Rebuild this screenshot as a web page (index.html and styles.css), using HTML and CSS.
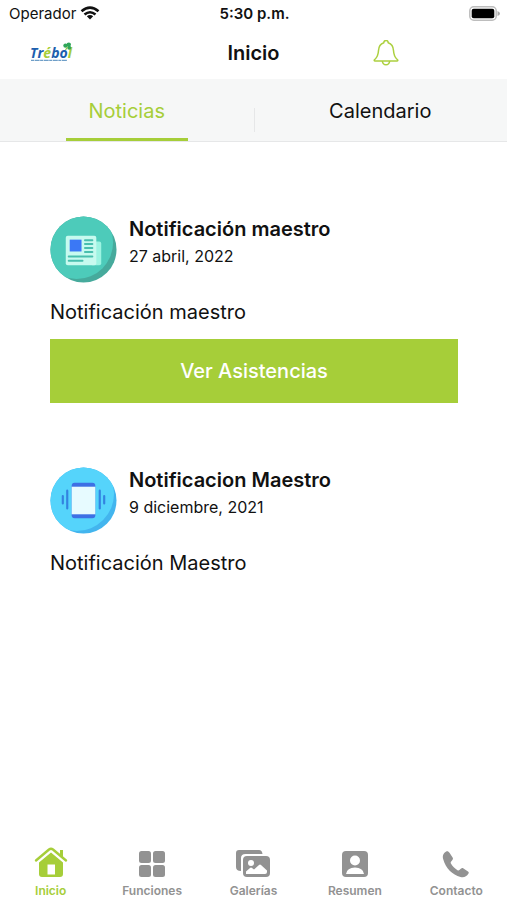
FILE: index.html
```html
<!DOCTYPE html>
<html lang="es">
<head>
<meta charset="utf-8">
<meta name="viewport" content="width=device-width, initial-scale=1">
<title>Inicio</title>
<link rel="stylesheet" href="styles.css">
</head>
<body>
<div class="status">
  <div class="carrier"><span>Operador</span>
    <svg width="20" height="14" viewBox="0 0 20 14" fill="none" stroke="#111" stroke-width="2.6"><path d="M1.5 5.2Q10-2 18.500 5.200"/><path d="M4.500 8.500Q10 4 15.500 8.500"/><path d="M10 13.600 6.800 10.300Q10 7.600 13.200 10.300Z" fill="#111" stroke="none"/></svg>
  </div>
  <div class="time">5:30 p.m.</div>
  <div class="battery">
    <svg width="31" height="15" viewBox="0 0 31 15"><rect x=".8" y=".8" width="26.400" height="13.400" rx="4" fill="#fff" stroke="#bdbdbd" stroke-width="1.500"/><rect x="2.700" y="2.700" width="22.600" height="9.600" rx="2" fill="#000"/><path d="M28.500 5v5q2.500-1 2.500-2.500T28.500 5" fill="#aaa"/></svg>
  </div>
</div>
<header class="header">
  <div class="logo">
    <svg width="44" height="21" viewBox="0 0 44 21" role="img" aria-label="Trébol">
      <text class="logo-text" x="1" y="16"><tspan fill="#1d5fae">Tr</tspan><tspan fill="#a6ce39">é</tspan><tspan fill="#1d5fae">bo</tspan><tspan fill="#a6ce39">l</tspan></text>
      <g fill="#2fa65a"><circle cx="36.500" cy="3.600" r="2.200"/><circle cx="39.800" cy="2.600" r="2.200"/><circle cx="40.200" cy="5.800" r="2"/></g>
      <path d="M38.500 5 36.500 8" stroke="#8cc63f" stroke-width="1.200"/>
      <path d="M2 18.300h36" stroke="#4c87bb" stroke-width="1" stroke-dasharray="3 .6 5 .5"/>
    </svg>
  </div>
  <h1>Inicio</h1>
  <button class="bell" type="button" aria-label="Notificaciones">
    <svg width="26" height="26" viewBox="0 0 26 26" fill="none" stroke="#acd03f" stroke-width="1.500" stroke-linejoin="round"><path d="M10.800 2.700a2.200 2.200 0 0 1 4.400 0C19 4 20.300 6.500 20.500 10.500c.2 4.500.8 6.500 4 9.300.5.600.3 1.100-.5 1.100H2c-.8 0-1-.5-.5-1.100 3.200-2.800 3.800-4.800 4-9.300C5.700 6.500 7 4 10.800 2.700Z"/><path d="M9.300 21c.3 2.500 1.600 3.800 3.700 3.800s3.400-1.300 3.700-3.800"/></svg>
  </button>
</header>
<nav class="tabs" aria-label="Secciones">
  <a class="tab active" href="#noticias">Noticias</a>
  <a class="tab" href="#calendario">Calendario</a>
</nav>
<main class="feed">
  <article>
    <div class="head">
      <svg class="icon" viewBox="0 0 68 68"><defs><clipPath id="disc"><circle cx="34" cy="34" r="33.500"/></clipPath></defs>
        <g clip-path="url(#disc)"><path d="M0 0h68v68H0z" fill="#46aa9c"/><circle cx="27" cy="27" r="37" fill="#4dcbba"/></g>
        <rect x="41" y="26" width="11" height="24" rx="2" fill="#9df4e2"/><rect x="16" y="20" width="31" height="30" rx="2" fill="#c7faef"/>
        <rect x="20" y="24" width="12" height="12" fill="#3b78f5"/>
        <path d="M35.500 24.500H43M35.500 28.500H43M35.500 32.500H43M35.500 36.500H43M19 41h24M19 45.500h14" stroke="#48bfae" stroke-width="2" stroke-linecap="round"/></svg>
      <div><h2>Notificación maestro</h2><time datetime="2022-04-27">27 abril, 2022</time></div>
    </div>
    <p>Notificación maestro</p>
    <button class="action" type="button">Ver Asistencias</button>
  </article>
  <article>
    <div class="head">
      <svg class="icon" viewBox="0 0 68 68">
        <g clip-path="url(#disc)"><path d="M0 0h68v68H0z" fill="#43b5ee"/><circle cx="27" cy="27" r="38" fill="#55d4fb"/></g>
        <rect x="22" y="16" width="24" height="36" rx="3" fill="#3d70e4"/><path d="M22 20h24v28H22z" fill="#e7fbff"/>
        <path d="M17.500 24v18M50.500 24v18M13 29.500v7.500M55 29.500v7.500" stroke="#3383e0" stroke-width="2.200" stroke-linecap="round"/></svg>
      <div><h2>Notificacion Maestro</h2><time datetime="2021-12-09">9 diciembre, 2021</time></div>
    </div>
    <p>Notificación Maestro</p>
  </article>
</main>
<nav class="bottom" aria-label="Principal">
  <a class="active" href="#inicio"><svg width="36" height="32" viewBox="0 0 36 32"><path d="M18 6.500 6 16.500V28q0 3 3 3h18q3 0 3-3V16.500ZM14.500 18.500h7.500V28.500h-7.500Z" fill="currentColor" fill-rule="evenodd"/><path d="M3 14.500 18 2 33 14.500" fill="none" stroke="#fff" stroke-width="5"/><path d="m3 14.500 13-11q2-1.600 4 0l13 11" fill="none" stroke="currentColor" stroke-width="2.400" stroke-linecap="round"/><path d="M27 4h3v8l-3-2.500Z" fill="currentColor"/></svg><span>Inicio</span></a>
  <a href="#funciones"><svg width="36" height="32" viewBox="0 0 36 32" fill="currentColor"><rect x="5" y="5" width="12" height="12" rx="2.500"/><rect x="19" y="5" width="12" height="12" rx="2.500"/><rect x="5" y="19" width="12" height="12" rx="2.500"/><rect x="19" y="19" width="12" height="12" rx="2.500"/></svg><span>Funciones</span></a>
  <a href="#galerias"><svg width="36" height="32" viewBox="0 0 36 32"><path d="M6 25q-5 0-5-4V7q0-3 3-3h20q3 0 3.500 4H10.500Q6 8 6 12Z" fill="currentColor"/><rect x="8" y="10" width="27" height="21" rx="4" fill="currentColor"/><circle cx="16" cy="17" r="3" fill="#fff"/><path d="M11 28v-2.500l4-3.500q1-.8 2 0l2 1.500 5-4.500q1-.8 2 0l6 5.500V26q0 2-2 2Z" fill="#fff"/></svg><span>Galerías</span></a>
  <a href="#resumen"><svg width="36" height="32" viewBox="0 0 36 32"><rect x="5" y="5" width="26" height="26" rx="4" fill="currentColor"/><circle cx="18" cy="14.500" r="5" fill="#fff"/><path d="M9 28q1-6.500 9-6.500t9 6.500Z" fill="#fff"/></svg><span>Resumen</span></a>
  <a href="#contacto"><svg width="36" height="32" viewBox="0 0 36 32"><path d="M8.200 5.500C5 7.500 4.300 10 5.300 13.500 7.500 22 14.500 29 22.500 31c3.500.8 6-.3 8-3.500.5-.9.300-1.500-.5-2.100l-4.500-3c-.9-.6-1.600-.5-2.400.2l-1.700 1.500c-.6.500-1.200.5-1.900.1-2.700-1.600-5-3.900-6.600-6.600-.4-.7-.4-1.300.1-1.900l1.400-1.700c.7-.8.8-1.500.2-2.400l-3.100-4.800c-.9-1.400-2-2.100-3.300-1.300Z" fill="currentColor"/></svg><span>Contacto</span></a>
</nav>
</body>
</html>
```

FILE: styles.css
```css
* { box-sizing: border-box; }
body {
  margin: 0;
  min-height: 100vh;
  display: flex;
  flex-direction: column;
  background: #fff;
  color: #111;
  font-family: Inter, "Liberation Sans", sans-serif;
}
h1, h2, p { margin: 0; font-weight: 600; }
a { color: inherit; text-decoration: none; }
button { border: 0; font: inherit; cursor: pointer; }
svg { display: block; }

.status {
  display: grid;
  grid-template-columns: 1fr auto 1fr;
  align-items: center;
  height: 26px;
  padding: 0 7px 0 9px;
  font-size: 15px;
}
.carrier { display: flex; align-items: center; gap: 4px; }
.time { font-size: 15px; font-weight: 600; }
.battery { justify-self: end; }

.header {
  display: grid;
  grid-template-columns: repeat(5, 1fr);
  align-items: center;
  justify-items: center;
  height: 53px;
}
.logo-text { font: italic 700 14px "Open Sans", sans-serif; }
.header h1 { grid-column: 3; font-size: 20px; line-height: 24px; }
.bell { padding: 0; background: none; justify-self: center; margin-left: 62px; }

.tabs {
  position: relative;
  display: grid;
  grid-template-columns: 1fr 1fr;
  height: 63px;
  background: #f6f7f7;
  border-bottom: 1px solid #e6e7e8;
}
.tabs::after {
  content: "";
  position: absolute;
  left: 50%;
  top: 29px;
  width: 1px;
  height: 24px;
  background: #e6e7e8;
}
.tab {
  justify-self: center;
  min-width: 122px;
  padding-top: 20px;
  font-size: 20px;
  line-height: 24px;
  text-align: center;
}
.tab.active { color: #a6ce39; border-bottom: 3px solid #a6ce39; }

.feed {
  flex: 1;
  display: flex;
  flex-direction: column;
  gap: 64px;
  padding: 74px 49px 24px 50px;
}
.head { display: flex; gap: 12px; }
.icon { width: 67px; height: 67px; flex: none; }
h2 { font-size: 20px; line-height: 26px; }
time { display: block; margin-top: 1px; font-size: 16px; line-height: 26px; }
article p { margin-top: 16px; font-size: 20px; line-height: 26px; font-weight: 400; }
.action {
  display: block;
  width: 100%;
  height: 64px;
  margin-top: 14px;
  background: #a6ce39;
  color: #fff;
  font-size: 20px;
  font-weight: 500;
}

.bottom { display: grid; grid-template-columns: repeat(5, 1fr); padding-bottom: 1px; }
.bottom a {
  display: flex;
  flex-direction: column;
  align-items: center;
  gap: 5px;
  color: #929292;
  font-size: 12px;
  font-weight: 600;
  line-height: 16px;
}
.bottom .active { color: #a6ce39; }
```
